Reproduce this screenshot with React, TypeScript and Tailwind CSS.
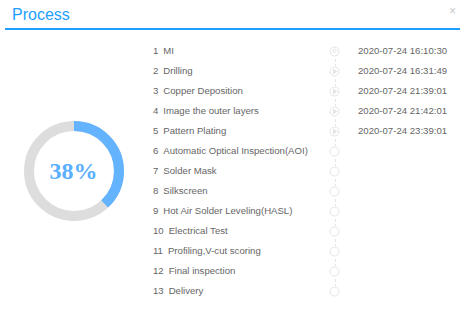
const steps = [
  { n: 1, name: "MI", time: "2020-07-24 16:10:30", state: "start" },
  { n: 2, name: "Drilling", time: "2020-07-24 16:31:49", state: "done" },
  { n: 3, name: "Copper Deposition", time: "2020-07-24 21:39:01", state: "done" },
  { n: 4, name: "Image the outer layers", time: "2020-07-24 21:42:01", state: "done" },
  { n: 5, name: "Pattern Plating", time: "2020-07-24 23:39:01", state: "done" },
  { n: 6, name: "Automatic Optical Inspection(AOI)", time: "", state: "todo" },
  { n: 7, name: "Solder Mask", time: "", state: "todo" },
  { n: 8, name: "Silkscreen", time: "", state: "todo" },
  { n: 9, name: "Hot Air Solder Leveling(HASL)", time: "", state: "todo" },
  { n: 10, name: "Electrical Test", time: "", state: "todo" },
  { n: 11, name: "Profiling,V-cut scoring", time: "", state: "todo" },
  { n: 12, name: "Final inspection", time: "", state: "todo" },
  { n: 13, name: "Delivery", time: "", state: "todo" },
];

function StepIcon({ state }: { state: string }) {
  return (
    <svg width="11" height="11" viewBox="0 0 11 11" className="relative z-10 bg-white">
      <circle cx="5.5" cy="5.5" r="4.5" fill="white" stroke="#e4e4e4" strokeWidth="1" />
      {state === "done" && <path d="M4 2.6 L8.6 5.5 L4 8.4 Z" fill="#e4e4e4" />}
      {state === "start" && <circle cx="5.5" cy="4.8" r="1.6" fill="none" stroke="#e4e4e4" strokeWidth="1" />}
    </svg>
  );
}

function Donut({ pct }: { pct: number }) {
  const r = 45;
  const c = 2 * Math.PI * r;
  return (
    <div className="relative h-[100px] w-[100px]">
      <svg width="100" height="100" viewBox="0 0 100 100">
        <circle cx="50" cy="50" r={r} fill="none" stroke="#dddddd" strokeWidth="10" />
        <circle
          cx="50"
          cy="50"
          r={r}
          fill="none"
          stroke="#63b3ff"
          strokeWidth="10"
          strokeDasharray={`${(c * pct) / 100} ${c}`}
          transform="rotate(-90 50 50)"
        />
      </svg>
      <div className="absolute inset-0 flex items-center justify-center font-['Liberation_Serif',serif] text-[24px] font-bold text-[#5aafff]">
        {pct}%
      </div>
    </div>
  );
}

export default function App() {
  return (
    <div className="h-[320px] w-[465px] bg-white font-['Liberation_Sans',Arial,sans-serif]">
      <div className="relative mx-[5px] flex h-[30px] items-center border-b-2 border-[#1e9fff] pl-[7px] pt-[2px]">
        <span className="text-[16px] leading-none text-[#1e9fff]">Process</span>
        <span className="absolute right-[4px] top-[5px] text-[12px] leading-none text-[#c8c8c8]">×</span>
      </div>
      <div className="flex">
        <div className="flex w-[145px] items-center justify-center pl-[2px] pt-[10px]">
          <Donut pct={38} />
        </div>
        <div className="relative flex flex-col pt-[11px] text-[9.6px] text-[#666]">
          <div className="absolute bottom-[14px] left-[189.5px] top-[19px] border-l border-dashed border-[#e4e4e4]" />
          {steps.map((s) => (
            <div key={s.n} className="flex h-[20px] items-center">
              <div className="w-[184px] pl-[8px]">
                {s.n}
                <span className="ml-[5px]">{s.name}</span>
              </div>
              <StepIcon state={s.state} />
              <span className="ml-[18px]">{s.time}</span>
            </div>
          ))}
        </div>
      </div>
    </div>
  );
}
